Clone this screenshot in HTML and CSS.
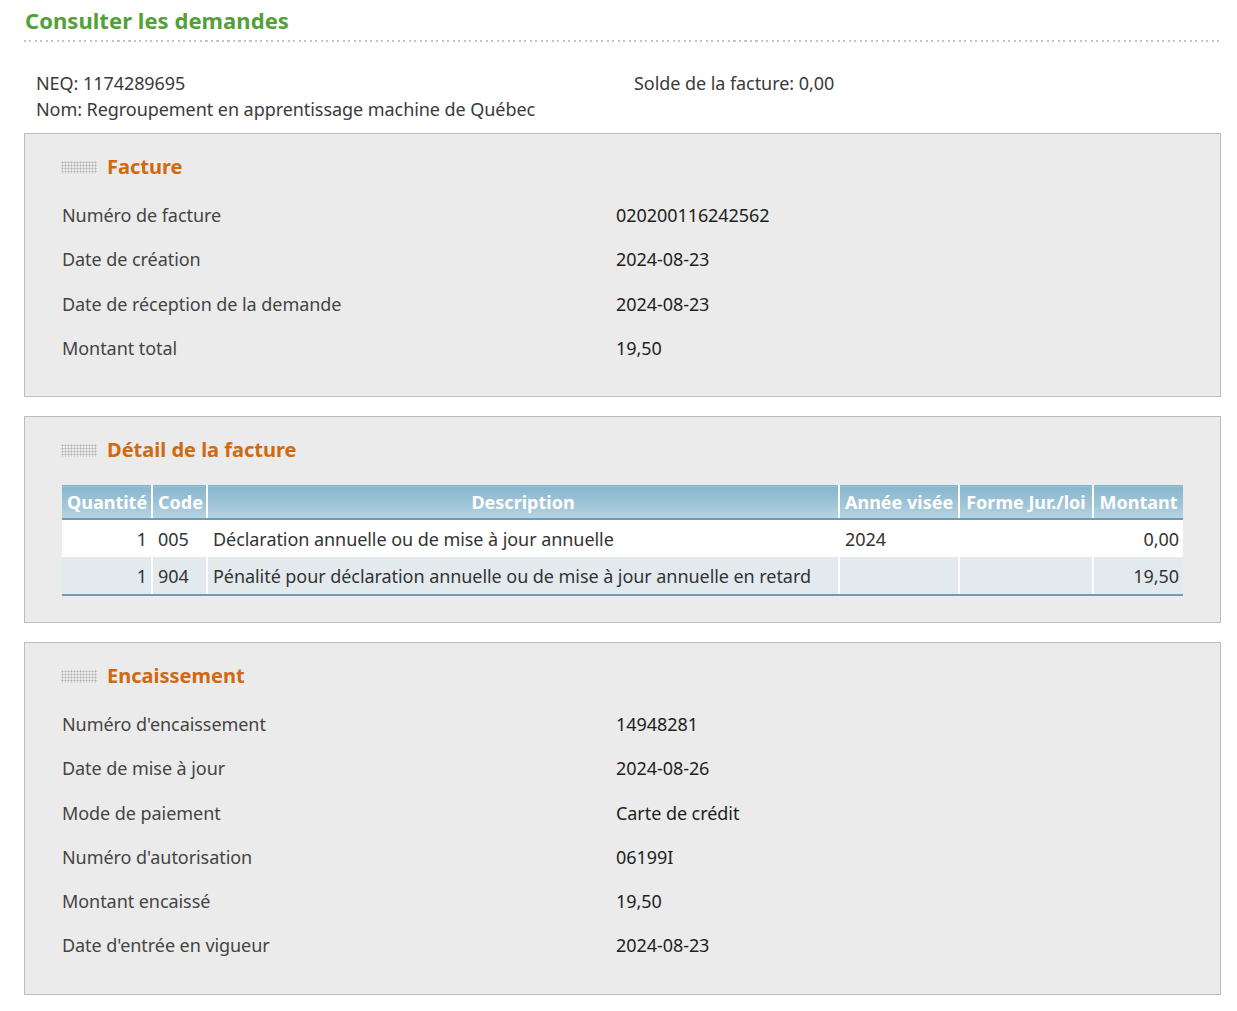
FILE: index.html
```html
<!DOCTYPE html>
<html lang="fr">
<head>
<meta charset="utf-8">
<title>Consulter les demandes</title>
<link rel="stylesheet" href="styles.css">
</head>
<body>
<div class="page">
  <h1 class="title">Consulter les demandes</h1>
  <div class="title-rule"></div>

  <div class="info">
    <div class="info-col">
      <div>NEQ: 1174289695</div>
      <div>Nom: Regroupement en apprentissage machine de Québec</div>
    </div>
    <div class="info-col">
      <div>Solde de la facture: 0,00</div>
    </div>
  </div>

  <section class="panel">
    <h2 class="panel-title"><span class="dots"></span>Facture</h2>
    <div class="rows">
      <div class="row"><span class="label">Numéro de facture</span><span class="value">020200116242562</span></div>
      <div class="row"><span class="label">Date de création</span><span class="value">2024-08-23</span></div>
      <div class="row"><span class="label">Date de réception de la demande</span><span class="value">2024-08-23</span></div>
      <div class="row"><span class="label">Montant total</span><span class="value">19,50</span></div>
    </div>
  </section>

  <section class="panel panel-table">
    <h2 class="panel-title"><span class="dots"></span>Détail de la facture</h2>
    <table class="detail">
      <colgroup>
        <col class="c-qte"><col class="c-code"><col class="c-desc"><col class="c-annee"><col class="c-forme"><col class="c-mont">
      </colgroup>
      <thead>
        <tr>
          <th>Quantité</th><th>Code</th><th>Description</th><th>Année visée</th><th>Forme Jur./loi</th><th>Montant</th>
        </tr>
      </thead>
      <tbody>
        <tr>
          <td class="num">1</td><td>005</td><td>Déclaration annuelle ou de mise à jour annuelle</td><td>2024</td><td></td><td class="num">0,00</td>
        </tr>
        <tr class="alt">
          <td class="num">1</td><td>904</td><td>Pénalité pour déclaration annuelle ou de mise à jour annuelle en retard</td><td></td><td></td><td class="num">19,50</td>
        </tr>
      </tbody>
    </table>
  </section>

  <section class="panel">
    <h2 class="panel-title"><span class="dots"></span>Encaissement</h2>
    <div class="rows">
      <div class="row"><span class="label">Numéro d'encaissement</span><span class="value">14948281</span></div>
      <div class="row"><span class="label">Date de mise à jour</span><span class="value">2024-08-26</span></div>
      <div class="row"><span class="label">Mode de paiement</span><span class="value">Carte de crédit</span></div>
      <div class="row"><span class="label">Numéro d'autorisation</span><span class="value">06199I</span></div>
      <div class="row"><span class="label">Montant encaissé</span><span class="value">19,50</span></div>
      <div class="row"><span class="label">Date d'entrée en vigueur</span><span class="value">2024-08-23</span></div>
    </div>
  </section>
</div>
</body>
</html>
```

FILE: styles.css
```css
html, body {
  margin: 0;
  padding: 0;
  background: #ffffff;
}

body {
  font-family: "Noto Sans", "Open Sans", "DejaVu Sans", sans-serif;
  font-size: 18px;
  letter-spacing: -0.06px;
  color: #333333;
}

.page {
  width: 1197px;
  margin-left: 24px;
  padding-top: 5px;
}

.title {
  margin: 0;
  padding-left: 1px;
  font-size: 22px;
  line-height: 30px;
  font-weight: 700;
  letter-spacing: 0.05px;
  color: #52a136;
}

.title-rule {
  height: 2px;
  margin-top: 5px;
  background: repeating-linear-gradient(to right, #c4c4c4 0 2px, transparent 2px 5.5px);
}

.info {
  display: grid;
  grid-template-columns: 598px 1fr;
  padding-left: 12px;
  margin-top: 28px;
  line-height: 26px;
  color: #3a3a3a;
}

.panel {
  margin-top: 11px;
  background: #ebebeb;
  border: 1px solid #bdbdbd;
  padding: 19px 37px 26px 37px;
}

.panel + .panel {
  margin-top: 19px;
}

.panel-table {
  padding-bottom: 26px;
}

.panel-title {
  display: flex;
  align-items: center;
  gap: 10px;
  margin: 0;
  font-size: 20px;
  line-height: 28px;
  font-weight: 700;
  letter-spacing: 0;
  color: #d0690f;
}

.dots {
  display: inline-block;
  width: 36px;
  height: 13px;
  margin-left: -1px;
  background-image: radial-gradient(circle, #b0b0b0 0.9px, transparent 1.1px);
  background-size: 3px 3px;
}

.rows {
  margin-top: 12px;
}

.row {
  display: grid;
  grid-template-columns: 554px 1fr;
  line-height: 44.25px;
}

.label {
  color: #444444;
}

.value {
  color: #1e1e1e;
}

.detail {
  margin-top: 21px;
  width: 1121px;
  border-collapse: collapse;
  table-layout: fixed;
}

.c-qte { width: 90px; }
.c-code { width: 55px; }
.c-desc { width: 632px; }
.c-annee { width: 120px; }
.c-forme { width: 134px; }
.c-mont { width: 90px; }

.detail th {
  height: 32px;
  padding: 0 5px;
  font-size: 18px;
  font-weight: 700;
  letter-spacing: 0;
  color: #ffffff;
  text-align: center;
  white-space: nowrap;
  background: linear-gradient(to bottom, #87b6cd 0%, #9fc4d7 55%, #b7d4e2 100%);
  border-left: 2px solid #ffffff;
  border-top: 1px solid #84b3ca;
  border-bottom: 2px solid #6a9cb5;
}

.detail th:first-child,
.detail td:first-child {
  border-left: none;
}

.detail td {
  height: 37px;
  padding: 0 4px 0 5px;
  color: #333333;
  background: #ffffff;
  border-left: 2px solid #ffffff;
  white-space: nowrap;
}

.detail tr.alt td {
  background: #e3eaee;
  border-bottom: 2px solid #6f9db4;
}

.detail td.num {
  text-align: right;
}
```
